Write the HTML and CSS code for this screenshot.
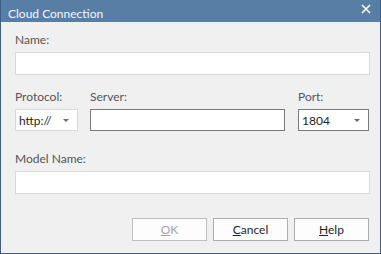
FILE: index.html
```html
<!DOCTYPE html>
<html lang="en">
<head>
    <meta charset="UTF-8">
    <title>Cloud Connection</title>
    <link rel="stylesheet" href="styles.css">
</head>
<body>
    <div class="dialog">
        <div class="titlebar">
            <span class="title">Cloud Connection</span>
            <svg class="close" width="10" height="10" viewBox="0 0 10 10">
                <path d="M1 1 L9 9 M9 1 L1 9" stroke="#ffffff" stroke-width="1.6"/>
            </svg>
        </div>
        <div class="content">
            <label class="label">Name:</label>
            <div class="field light"></div>

            <div class="row">
                <div class="col">
                    <label class="label">Protocol:</label>
                    <div class="select light">
                        <span>http://</span>
                        <span class="arrow"></span>
                    </div>
                </div>
                <div class="col">
                    <label class="label">Server:</label>
                    <div class="field dark small"></div>
                </div>
                <div class="col">
                    <label class="label">Port:</label>
                    <div class="select dark">
                        <span>1804</span>
                        <span class="arrow"></span>
                    </div>
                </div>
            </div>

            <label class="label model">Model Name:</label>
            <div class="field light"></div>

            <div class="buttons">
                <button class="btn disabled"><u>O</u>K</button>
                <button class="btn"><u>C</u>ancel</button>
                <button class="btn"><u>H</u>elp</button>
            </div>
        </div>
    </div>
</body>
</html>
```

FILE: styles.css
```css
body {
    margin: 0;
    font-family: Lato, "Open Sans", sans-serif;
    font-size: 12px;
}
.dialog {
    width: 379px;
    height: 253px;
    border: 1px solid #3e5f86;
    border-top: none;
    background-color: #f0f0f0;
    display: flex;
    flex-direction: column;
}
.titlebar {
    height: 22px;
    background-color: #587ea6;
    color: #f4f7fb;
    display: flex;
    align-items: center;
    justify-content: space-between;
    padding: 0 9px 0 7px;
    flex-shrink: 0;
}
.title {
    font-size: 12px;
    margin-top: 5px;
}
.close {
    margin-top: -4px;
}
.content {
    padding: 9px 10px 0 14px;
    display: flex;
    flex-direction: column;
}
.label {
    display: block;
    color: #555555;
    height: 17px;
    line-height: 17px;
    margin-bottom: 4px;
}
.field {
    height: 21px;
    background-color: #ffffff;
    border: 1px solid #dadada;
}
.field.small {
    height: 20px;
}
.light {
    border-color: #d9d9d9;
}
.dark {
    border-color: #7a7a7a;
}
.row {
    display: grid;
    grid-template-columns: 63px 195px 72px;
    column-gap: 12px;
    margin-top: 13px;
}
.row .col:last-child {
    margin-left: 1px;
}
.select {
    height: 20px;
    background-color: #ffffff;
    border: 1px solid #d9d9d9;
    display: flex;
    align-items: center;
    justify-content: space-between;
    padding: 0 8px 0 3px;
    color: #1e1e1e;
}
.select.dark {
    border-color: #7a7a7a;
}
.arrow {
    width: 0;
    height: 0;
    border-left: 3px solid transparent;
    border-right: 3px solid transparent;
    border-top: 3px solid #6b6b6b;
}
.model {
    margin-top: 19px;
}
.buttons {
    display: flex;
    justify-content: flex-end;
    gap: 6px;
    margin-top: 24px;
    padding-right: 1px;
}
.btn {
    width: 75px;
    height: 23px;
    border: 1px solid #adadad;
    background-color: #fdfdfd;
    font-family: Lato, "Open Sans", sans-serif;
    font-size: 12px;
    color: #1e1e1e;
    padding: 0;
}
.btn.disabled {
    color: #a3a3a3;
    border-color: #bfbfbf;
}
```
